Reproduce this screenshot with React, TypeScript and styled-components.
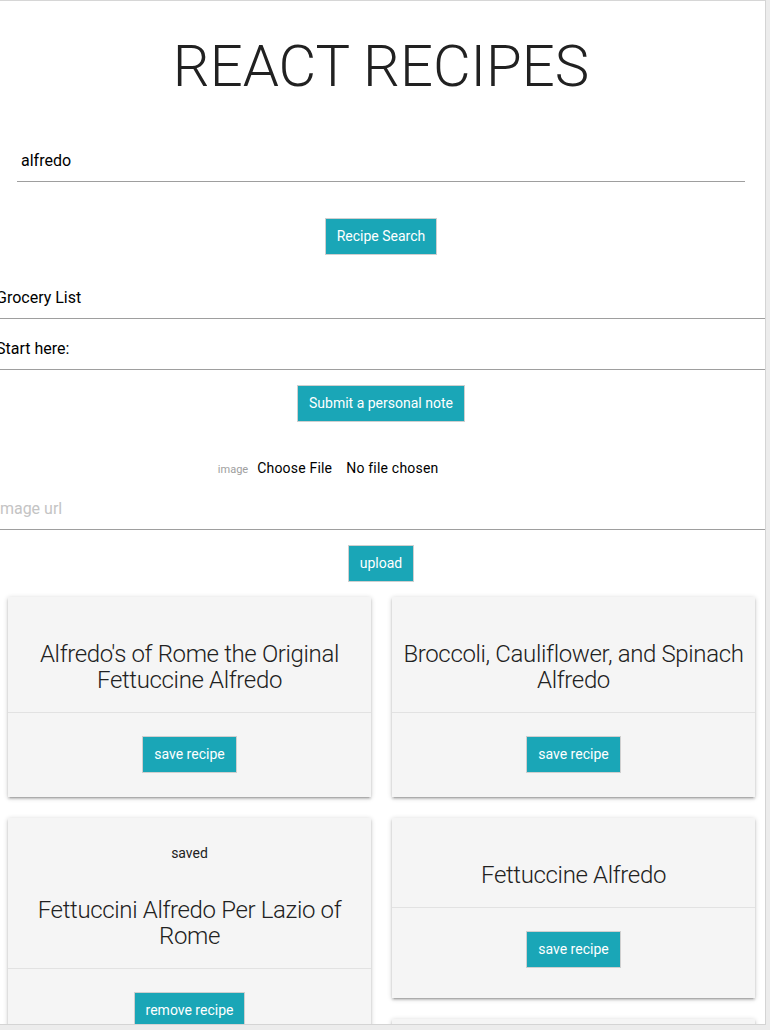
import React from "react";
import styled, { createGlobalStyle } from "styled-components";

const GlobalStyle = createGlobalStyle`
  html, body {
    margin: 0;
    padding: 0;
    background: #ececec;
  }
  body {
    font-family: Roboto, "Liberation Sans", sans-serif;
    color: #000;
    -webkit-font-smoothing: antialiased;
  }
  * { box-sizing: border-box; }
`;

const Frame = styled.div`
  width: 766px;
  height: 1025px;
  overflow: hidden;
  background: #fff;
  border-top: 1px solid #d6d6d6;
  border-right: 1px solid #d4d4d4;
  border-bottom: 1px solid #d4d4d4;
`;

const Page = styled.div`
  width: 762px;
  display: flex;
  flex-direction: column;
  align-items: stretch;
`;

const Title = styled.h1`
  margin: 31px 0 0;
  font-size: 58px;
  font-weight: 300;
  line-height: normal;
  text-align: center;
  color: #212121;
`;

const SearchInput = styled.input`
  margin: 34px 17px 0;
  height: 48px;
  padding: 6px 4px 0;
  border: none;
  border-bottom: 1px solid #9e9e9e;
  outline: none;
  background: transparent;
  font-family: Roboto, "Liberation Sans", sans-serif;
  font-size: 16px;
  color: #000;
`;

const ButtonRow = styled.div<{ $top: number }>`
  display: flex;
  justify-content: center;
  margin-top: ${(p) => p.$top}px;
`;

const Button = styled.button`
  height: 37px;
  padding: 0 11px;
  border: 1px solid #cfcfcf;
  border-radius: 0;
  background: #1aa6b7;
  color: #fff;
  font-family: Roboto, "Liberation Sans", sans-serif;
  font-size: 14px;
  font-weight: 400;
  line-height: 35px;
  cursor: pointer;
`;

const Field = styled.input<{ $top: number }>`
  margin: ${(p) => p.$top}px 0 0 -4px;
  width: 772px;
  height: 47px;
  padding: 4px 0 0;
  border: none;
  border-bottom: 1px solid #9e9e9e;
  outline: none;
  background: transparent;
  font-family: Roboto, "Liberation Sans", sans-serif;
  font-size: 16px;
  color: #000;
  &::placeholder {
    color: #c4c4c4;
    opacity: 1;
  }
`;

const FileRow = styled.div`
  margin-top: 36px;
  display: flex;
  justify-content: center;
  align-items: center;
  gap: 9px;
  height: 20px;
`;

const FileLabel = styled.span`
  font-size: 11px;
  color: #9e9e9e;
  padding-top: 2px;
`;

const FileWidget = styled.div`
  width: 287px;
  display: flex;
  align-items: center;
  gap: 14px;
  font-size: 14px;
  letter-spacing: 0.2px;
  color: #000;
`;

const Columns = styled.div`
  margin-top: 15px;
  padding: 0 7px 0 8px;
  display: grid;
  grid-template-columns: 1fr 1fr;
  column-gap: 21px;
  align-items: start;
`;

const Column = styled.div`
  display: flex;
  flex-direction: column;
  gap: 21px;
`;

const Card = styled.div`
  background: #f5f5f5;
  box-shadow: 0 2px 2px 0 rgba(0, 0, 0, 0.14), 0 3px 1px -2px rgba(0, 0, 0, 0.12),
    0 1px 5px 0 rgba(0, 0, 0, 0.2);
`;

const CardContent = styled.div`
  padding: 24px 8px 19px;
  display: flex;
  flex-direction: column;
  align-items: center;
  text-align: center;
`;

const Saved = styled.p`
  margin: 0 0 13px;
  font-size: 14px;
  line-height: 22px;
  color: #212121;
`;

const CardTitle = styled.h2`
  margin: 20px 0 0;
  font-size: 24px;
  font-weight: 300;
  line-height: 26px;
  letter-spacing: -0.35px;
  color: #212121;
`;

const CardAction = styled.div<{ $bottom: number }>`
  border-top: 1px solid #e2e2e2;
  padding: 23px 10px ${(p) => p.$bottom}px;
  display: flex;
  justify-content: center;
`;

type Recipe = { title: string; saved?: boolean; bottom?: number };

const left: Recipe[] = [
  { title: "Alfredo's of Rome the Original Fettuccine Alfredo" },
  { title: "Fettuccini Alfredo Per Lazio of Rome", saved: true },
];
const right: Recipe[] = [
  { title: "Broccoli, Cauliflower, and Spinach Alfredo" },
  { title: "Fettuccine Alfredo", bottom: 30 },
  { title: "Chicken Alfredo" },
];

const RecipeCard = ({ r }: { r: Recipe }) => (
  <Card>
    <CardContent>
      {r.saved && <Saved>saved</Saved>}
      <CardTitle>{r.title}</CardTitle>
    </CardContent>
    <CardAction $bottom={r.bottom ?? 24}>
      <Button>{r.saved ? "remove recipe" : "save recipe"}</Button>
    </CardAction>
  </Card>
);

export default function App() {
  return (
    <>
      <GlobalStyle />
      <Frame>
        <Page>
          <Title>REACT RECIPES</Title>
          <SearchInput defaultValue="alfredo" />
          <ButtonRow $top={36}>
            <Button>Recipe Search</Button>
          </ButtonRow>
          <Field $top={17} defaultValue="Grocery List" />
          <Field $top={4} defaultValue="Start here:" />
          <ButtonRow $top={15}>
            <Button>Submit a personal note</Button>
          </ButtonRow>
          <FileRow>
            <FileLabel>image</FileLabel>
            <FileWidget>
              <span>Choose File</span>
              <span>No file chosen</span>
            </FileWidget>
          </FileRow>
          <Field $top={5} placeholder="image url" />
          <ButtonRow $top={15}>
            <Button>upload</Button>
          </ButtonRow>
          <Columns>
            <Column>
              {left.map((r) => (
                <RecipeCard key={r.title} r={r} />
              ))}
            </Column>
            <Column>
              {right.map((r) => (
                <RecipeCard key={r.title} r={r} />
              ))}
            </Column>
          </Columns>
        </Page>
      </Frame>
    </>
  );
}
